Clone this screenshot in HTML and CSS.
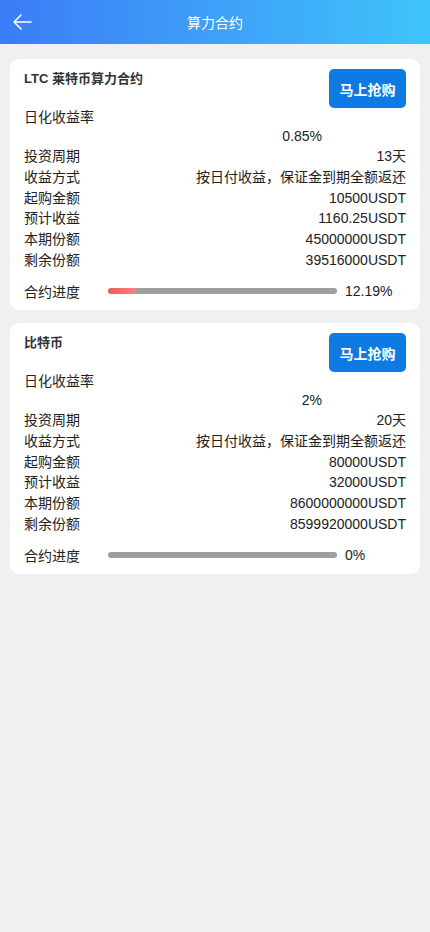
FILE: index.html
```html
<!DOCTYPE html>
<html lang="zh">
<head>
<meta charset="utf-8">
<meta name="viewport" content="width=device-width, initial-scale=1">
<title>算力合约</title>
<link rel="stylesheet" href="styles.css">
</head>
<body>
<header class="topbar">
  <svg class="back" width="20" height="18" viewBox="0 0 20 18" fill="none" stroke="#fff" stroke-width="1.6" stroke-linecap="round" stroke-linejoin="round"><path d="M19 9H2M9 2L2 9l7 7"/></svg>
  <div class="title">算力合约</div>
</header>
<main class="list">
  <section class="card">
    <div class="top">
      <div class="name">LTC 莱特币算力合约</div>
      <button class="buy">马上抢购</button>
    </div>
    <div class="rate-label">日化收益率</div>
    <div class="rate-value">0.85%</div>
    <div class="row"><span>投资周期</span><span>13天</span></div>
    <div class="row"><span>收益方式</span><span>按日付收益，保证金到期全额返还</span></div>
    <div class="row"><span>起购金额</span><span>10500USDT</span></div>
    <div class="row"><span>预计收益</span><span>1160.25USDT</span></div>
    <div class="row"><span>本期份额</span><span>45000000USDT</span></div>
    <div class="row"><span>剩余份额</span><span>39516000USDT</span></div>
    <div class="progress">
      <span class="plabel">合约进度</span>
      <div class="bar"><div class="fill" style="width:12.19%"></div></div>
      <span class="pct">12.19%</span>
    </div>
  </section>
  <section class="card">
    <div class="top">
      <div class="name">比特币</div>
      <button class="buy">马上抢购</button>
    </div>
    <div class="rate-label">日化收益率</div>
    <div class="rate-value">2%</div>
    <div class="row"><span>投资周期</span><span>20天</span></div>
    <div class="row"><span>收益方式</span><span>按日付收益，保证金到期全额返还</span></div>
    <div class="row"><span>起购金额</span><span>80000USDT</span></div>
    <div class="row"><span>预计收益</span><span>32000USDT</span></div>
    <div class="row"><span>本期份额</span><span>8600000000USDT</span></div>
    <div class="row"><span>剩余份额</span><span>8599920000USDT</span></div>
    <div class="progress">
      <span class="plabel">合约进度</span>
      <div class="bar"><div class="fill" style="width:0%"></div></div>
      <span class="pct">0%</span>
    </div>
  </section>
</main>
</body>
</html>
```
FILE: styles.css
```css
* { box-sizing: border-box; }
html, body { margin: 0; padding: 0; }
body {
  background: #f1f0f0;
  font-family: "Liberation Sans", "Noto Sans CJK SC", sans-serif;
  color: #222;
  font-size: 14px;
  min-height: 932px;
}
.topbar {
  height: 44px;
  background: linear-gradient(90deg, #3a7cf6 0%, #3ea0f8 50%, #3fc4fa 100%);
  display: flex;
  align-items: center;
  justify-content: center;
  position: relative;
}
.back {
  position: absolute;
  left: 12px;
  top: 13px;
}
.title {
  color: #fff;
  font-size: 14px;
}
.list {
  padding: 15px 10px 0;
  display: flex;
  flex-direction: column;
  gap: 13px;
}
.card {
  background: #fff;
  border-radius: 9px;
  padding: 10px 14px 16px;
  height: 251px;
}
.top {
  display: flex;
  justify-content: space-between;
  align-items: flex-start;
  height: 39px;
}
.name {
  font-weight: bold;
  font-size: 13px;
  line-height: 20px;
  color: #333;
}
.buy {
  width: 77px;
  height: 39px;
  border: none;
  border-radius: 5px;
  background: #0d7be3;
  color: #fff;
  font-family: "Liberation Sans", "Noto Sans CJK SC", sans-serif;
  font-weight: bold;
  font-size: 14px;
  padding: 0;
}
.rate-label {
  line-height: 18px;
}
.rate-value {
  line-height: 20px;
  text-align: right;
  padding-right: 84px;
}
.row {
  display: flex;
  justify-content: space-between;
  line-height: 20.8px;
}
.progress {
  display: flex;
  align-items: center;
  margin-top: 10px;
  height: 20px;
}
.plabel {
  width: 84px;
  flex: none;
}
.bar {
  width: 229px;
  height: 6px;
  border-radius: 3px;
  background: #9e9e9e;
  overflow: hidden;
  flex: none;
}
.fill {
  height: 100%;
  border-radius: 3px;
  background: linear-gradient(90deg, #f2595a, #ff8181);
}
.pct {
  margin-left: 8px;
}
```
